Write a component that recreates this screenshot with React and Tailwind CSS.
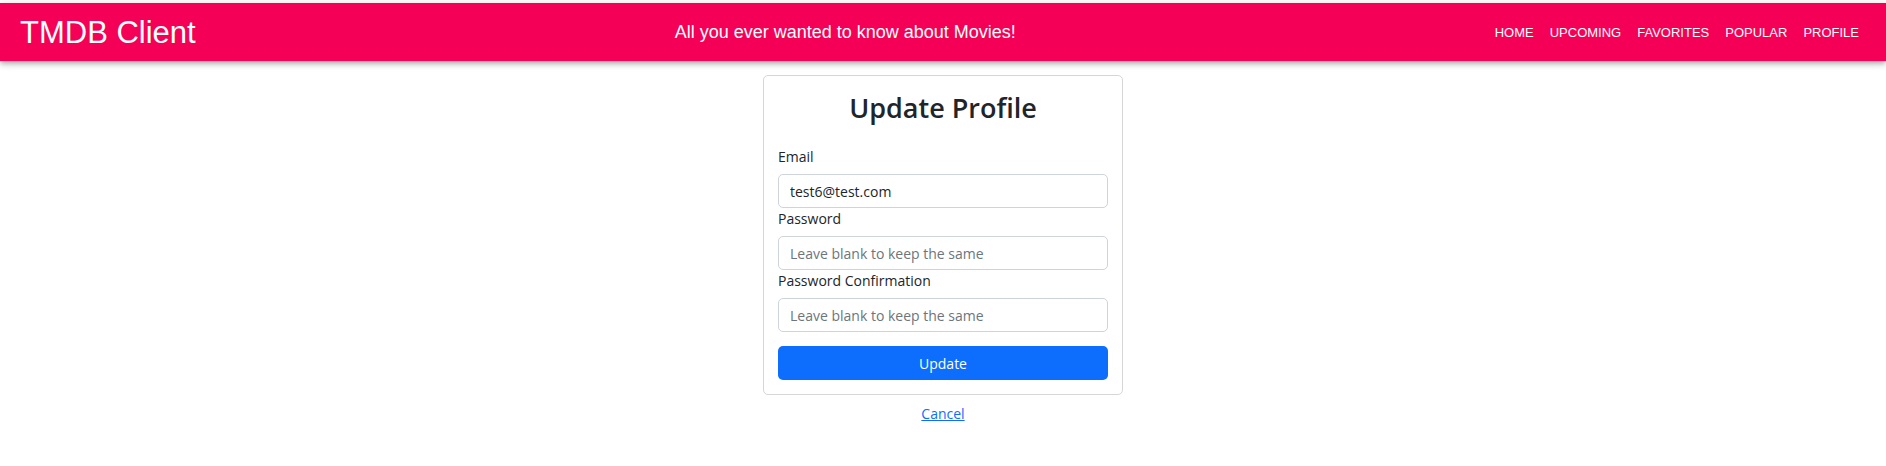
const NAV = ['HOME', 'UPCOMING', 'FAVORITES', 'POPULAR', 'PROFILE'];

const bs = { fontFamily: '"Open Sans", "Noto Sans", sans-serif' };

function Field({ label, value, placeholder }) {
  return (
    <div>
      <label className="block h-[21px] leading-[21px] mb-[7px] text-[14px] text-[#212529]">{label}</label>
      <input
        type="text"
        defaultValue={value}
        placeholder={placeholder}
        className="block w-full h-[34px] px-[11px] rounded-[5px] border border-[#ced4da] bg-white text-[14px] text-[#212529] placeholder-[#6c757d] outline-none"
        style={bs}
      />
    </div>
  );
}

export default function App() {
  return (
    <div className="min-h-[466px] bg-white">
      <header
        className="mt-[3px] h-[58px] flex items-center bg-[#f50057] text-white pl-[20px] pr-[27px] shadow-[0_2px_4px_-1px_rgba(0,0,0,0.2),0_4px_5px_0_rgba(0,0,0,0.14),0_1px_10px_0_rgba(0,0,0,0.12)]"
        style={{ fontFamily: '"Liberation Sans", Arial, sans-serif' }}
      >
        <h1 className="text-[31px] leading-none">TMDB Client</h1>
        <p className="flex-1 text-center text-[18px] leading-none">All you ever wanted to know about Movies!</p>
        <nav className="flex items-center gap-[16px]">
          {NAV.map(item => (
            <a key={item} className="text-[13px] leading-none cursor-pointer">{item}</a>
          ))}
        </nav>
      </header>

      <main className="flex flex-col items-center pt-[14px]" style={bs}>
        <div className="w-[360px] border border-[#d6d6d6] rounded-[5px] p-[14px] bg-white">
          <h2 className="h-[35px] leading-[35px] mb-[21px] text-center text-[27px] font-semibold text-[#212529]">Update Profile</h2>
          <Field label="Email" value="test6@test.com" />
          <Field label="Password" placeholder="Leave blank to keep the same" />
          <Field label="Password Confirmation" placeholder="Leave blank to keep the same" />
          <button className="mt-[14px] w-full h-[34px] rounded-[5px] bg-[#0d6efd] text-white text-[14px]">Update</button>
        </div>
        <a className="mt-[8px] leading-[21px] text-[14px] text-[#0d6efd] underline cursor-pointer">Cancel</a>
      </main>
    </div>
  );
}
